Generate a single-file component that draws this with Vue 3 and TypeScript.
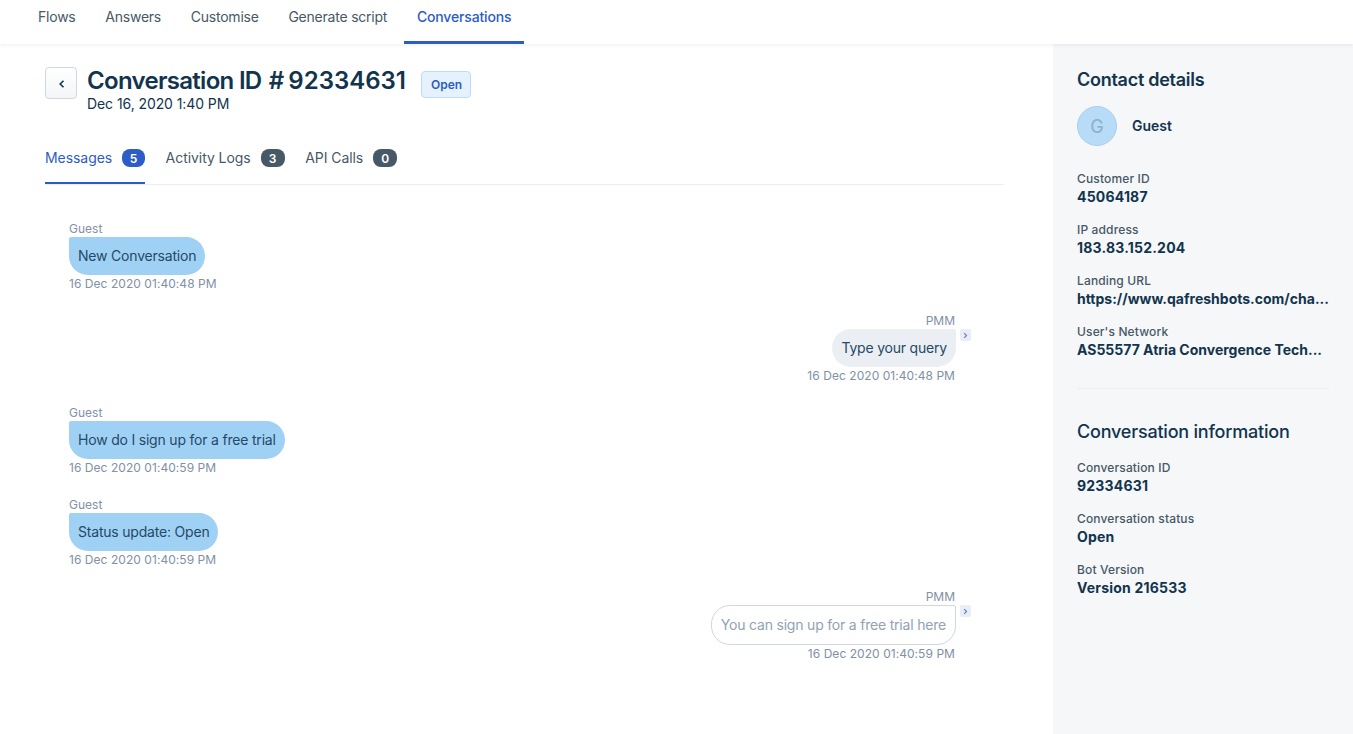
<template>
  <div class="app">
    <nav class="top-nav">
      <a
        v-for="item in navItems"
        :key="item"
        class="nav-item"
        :class="{ active: item === activeNav }"
        @click="activeNav = item"
      >{{ item }}</a>
    </nav>

    <div class="page">
      <main class="content">
        <header class="page-header">
          <button class="btn-back" title="Back">
            <svg width="8" height="10" viewBox="0 0 8 10">
              <path d="M5.5 1.7 2.2 5l3.3 3.3" fill="none" stroke="#12344d" stroke-width="1.6" />
            </svg>
          </button>
          <div class="page-heading">
            <h1>Conversation ID <span class="number"># 92334631</span></h1>
            <div class="page-date">Dec 16, 2020 1:40 PM</div>
          </div>
          <span class="status">Open</span>
        </header>

        <div class="tabs">
          <button
            v-for="tab in tabs"
            :key="tab.name"
            class="tab"
            :class="{ active: tab.name === activeTab }"
            @click="activeTab = tab.name"
          >
            <span class="tab-name">{{ tab.name }}</span>
            <span class="tab-count">{{ tab.count }}</span>
          </button>
        </div>

        <div class="messages">
          <div v-for="(msg, i) in messages" :key="i" class="message" :class="msg.kind">
            <div class="author">{{ msg.author }}</div>
            <div class="bubble">
              {{ msg.text }}
              <button v-if="msg.kind !== 'guest'" class="btn-expand" title="Details">
                <svg width="5" height="7" viewBox="0 0 5 7">
                  <path d="M1.2 1.2l2.3 2.3-2.3 2.3" fill="none" stroke="#5f83d3" stroke-width="1.2" />
                </svg>
              </button>
            </div>
            <div class="time">{{ msg.time }}</div>
          </div>
        </div>
      </main>

      <aside class="sidebar">
        <section class="contact">
          <h2>Contact details</h2>
          <div class="person">
            <div class="avatar">G</div>
            <div class="person-name">Guest</div>
          </div>
          <dl>
            <div v-for="field in contactFields" :key="field.label" class="field">
              <dt>{{ field.label }}</dt>
              <dd :class="{ long: field.value.endsWith('...') }">{{ field.value }}</dd>
            </div>
          </dl>
        </section>
        <section class="info">
          <h2>Conversation information</h2>
          <dl>
            <div v-for="field in infoFields" :key="field.label" class="field">
              <dt>{{ field.label }}</dt>
              <dd>{{ field.value }}</dd>
            </div>
          </dl>
        </section>
      </aside>
    </div>
  </div>
</template>

<script setup lang="ts">
import { ref } from 'vue';

interface Tab {
  name: string;
  count: number;
}

interface Message {
  kind: 'guest' | 'bot' | 'bot option';
  author: string;
  text: string;
  time: string;
}

interface Field {
  label: string;
  value: string;
}

const navItems = ['Flows', 'Answers', 'Customise', 'Generate script', 'Conversations'];
const activeNav = ref('Conversations');

const tabs: Tab[] = [
  { name: 'Messages', count: 5 },
  { name: 'Activity Logs', count: 3 },
  { name: 'API Calls', count: 0 },
];
const activeTab = ref('Messages');

const messages: Message[] = [
  { kind: 'guest', author: 'Guest', text: 'New Conversation', time: '16 Dec 2020 01:40:48 PM' },
  { kind: 'bot', author: 'PMM', text: 'Type your query', time: '16 Dec 2020 01:40:48 PM' },
  { kind: 'guest', author: 'Guest', text: 'How do I sign up for a free trial', time: '16 Dec 2020 01:40:59 PM' },
  { kind: 'guest', author: 'Guest', text: 'Status update: Open', time: '16 Dec 2020 01:40:59 PM' },
  { kind: 'bot option', author: 'PMM', text: 'You can sign up for a free trial here', time: '16 Dec 2020 01:40:59 PM' },
];

const contactFields: Field[] = [
  { label: 'Customer ID', value: '45064187' },
  { label: 'IP address', value: '183.83.152.204' },
  { label: 'Landing URL', value: 'https://www.qafreshbots.com/cha...' },
  { label: "User's Network", value: 'AS55577 Atria Convergence Tech...' },
];

const infoFields: Field[] = [
  { label: 'Conversation ID', value: '92334631' },
  { label: 'Conversation status', value: 'Open' },
  { label: 'Bot Version', value: 'Version 216533' },
];
</script>

<style>
body {
  margin: 0;
  background: #fff;
}
</style>

<style scoped>
.app {
  height: 100vh;
  overflow: hidden;
  display: flex;
  flex-direction: column;
  font-family: Inter, 'Liberation Sans', sans-serif;
  font-size: 14px;
  color: #12344d;
}

button {
  font-family: inherit;
  cursor: pointer;
}

h1,
h2,
dl,
dd {
  margin: 0;
}

/* Top navigation */
.top-nav {
  flex: none;
  height: 44px;
  padding-left: 25px;
  display: flex;
  gap: 3.7px;
  background: #fff;
  box-shadow: 0 1px 4px rgba(18, 52, 77, 0.08);
  z-index: 1;
}

.nav-item {
  box-sizing: border-box;
  height: 44px;
  padding: 7px 13px 0;
  line-height: 20px;
  letter-spacing: -0.22px;
  color: #475867;
  border-bottom: 3px solid transparent;
  cursor: pointer;
}

.nav-item.active {
  color: #2c5cc5;
  font-weight: 500;
  letter-spacing: -0.16px;
  border-bottom-color: #2c5cc5;
}

.page {
  flex: 1;
  min-height: 0;
  display: flex;
}

.content {
  flex: 1;
  padding: 23px 49px 0 45px;
}

/* Header */
.page-header {
  display: flex;
  align-items: flex-start;
  height: 68px;
}

.btn-back {
  box-sizing: border-box;
  width: 32px;
  height: 32px;
  margin-right: 10px;
  padding: 1px 0 0 1px;
  display: flex;
  align-items: center;
  justify-content: center;
  border: 1px solid #cfd7df;
  border-radius: 4px;
  background: linear-gradient(#fff, #f3f5f7);
}

.page-heading h1 {
  font-size: 24px;
  font-weight: 600;
  line-height: 28px;
  letter-spacing: -0.7px;
  white-space: nowrap;
}

.number {
  margin-left: 2px;
  letter-spacing: 0;
  word-spacing: -2px;
}

.page-date {
  line-height: 18px;
  letter-spacing: -0.08px;
}

.status {
  margin: 4px 0 0 15px;
  padding: 0 8px 0 9px;
  line-height: 25px;
  font-size: 12px;
  font-weight: 600;
  color: #2c5cc5;
  background: #e5f2fd;
  border: 1px solid #bbdcfe;
  border-radius: 4px;
}

/* Tabs */
.tabs {
  display: flex;
  gap: 20.5px;
  height: 49px;
  border-bottom: 1px solid #ebeff3;
}

.tab {
  display: flex;
  align-items: flex-start;
  box-sizing: border-box;
  height: 49px;
  padding: 14px 0 0;
  background: none;
  border: none;
  border-bottom: 2px solid transparent;
  font-size: 14px;
  color: #475867;
}

.tab-name {
  line-height: 18px;
  letter-spacing: -0.06px;
}

.tab-count {
  margin-left: 10px;
  width: 24px;
  height: 18px;
  line-height: 19px;
  border-radius: 8px;
  background: #475867;
  color: #fff;
  font-size: 12px;
  font-weight: 600;
  text-align: center;
}

.tab.active {
  color: #2c5cc5;
  border-bottom-color: #2c5cc5;
}

.tab.active .tab-count {
  width: 23px;
  background: #2c5cc5;
}

/* Messages */
.messages {
  display: flex;
  flex-direction: column;
  gap: 21px;
  padding: 36px 48px 0 24px;
}

.message {
  display: flex;
  flex-direction: column;
  align-items: flex-start;
}

.message.bot {
  align-items: flex-end;
}

.author,
.time {
  font-size: 12px;
  color: #8190a5;
}

.author {
  line-height: 16px;
}

.time {
  line-height: 17px;
  letter-spacing: 0.05px;
}

.bot .author,
.bot .time {
  padding-right: 1px;
}

.bubble {
  position: relative;
  padding: 0 9px;
  line-height: 38px;
  letter-spacing: -0.2px;
  color: #264966;
  background: #9fd1f5;
  border-radius: 2px 19px 19px 19px;
}

.bot .bubble {
  background: #ebeff4;
  border-radius: 19px 2px 19px 19px;
}

.option .bubble {
  color: #92a2b1;
  background: #fff;
  border: 1px solid #cfd7df;
}

.btn-expand {
  position: absolute;
  top: 0;
  right: -15px;
  width: 11px;
  height: 12px;
  padding: 0;
  display: flex;
  align-items: center;
  justify-content: center;
  border: none;
  border-radius: 2px;
  background: #e9edf4;
}

.option .btn-expand {
  top: -1px;
  right: -16px;
}

/* Sidebar */
.sidebar {
  box-sizing: border-box;
  flex: none;
  width: 300px;
  padding: 24px 24px 0;
  background: #f5f7f9;
}

.sidebar h2 {
  font-size: 18px;
  font-weight: 600;
  line-height: 24px;
  letter-spacing: -0.27px;
}

.contact {
  padding-bottom: 15px;
  border-bottom: 1px solid #ebeff3;
}

.info {
  padding-top: 31px;
}

.info h2 {
  font-weight: 500;
  letter-spacing: -0.21px;
}

.person {
  display: flex;
  align-items: center;
  margin: 14px 0 24px;
}

.avatar {
  box-sizing: border-box;
  width: 40px;
  height: 40px;
  margin-right: 15px;
  border: 1px solid #a9d0ee;
  border-radius: 50%;
  background: #b8dcf8;
  color: #8cb4d0;
  font-size: 18px;
  font-weight: 500;
  line-height: 40px;
  text-align: center;
}

.person-name {
  font-weight: 600;
  line-height: 18px;
  padding-bottom: 1px;
}

.field {
  height: 51px;
  white-space: nowrap;
}

.contact .field:last-child {
  height: 50px;
}

.info dl {
  padding-top: 15px;
}

dt {
  font-size: 12px;
  font-weight: 500;
  line-height: 18px;
  letter-spacing: 0.14px;
  color: #475867;
}

dd {
  font-weight: 700;
  line-height: 18px;
  letter-spacing: 0.2px;
}

dd.long {
  letter-spacing: 0;
}
</style>
